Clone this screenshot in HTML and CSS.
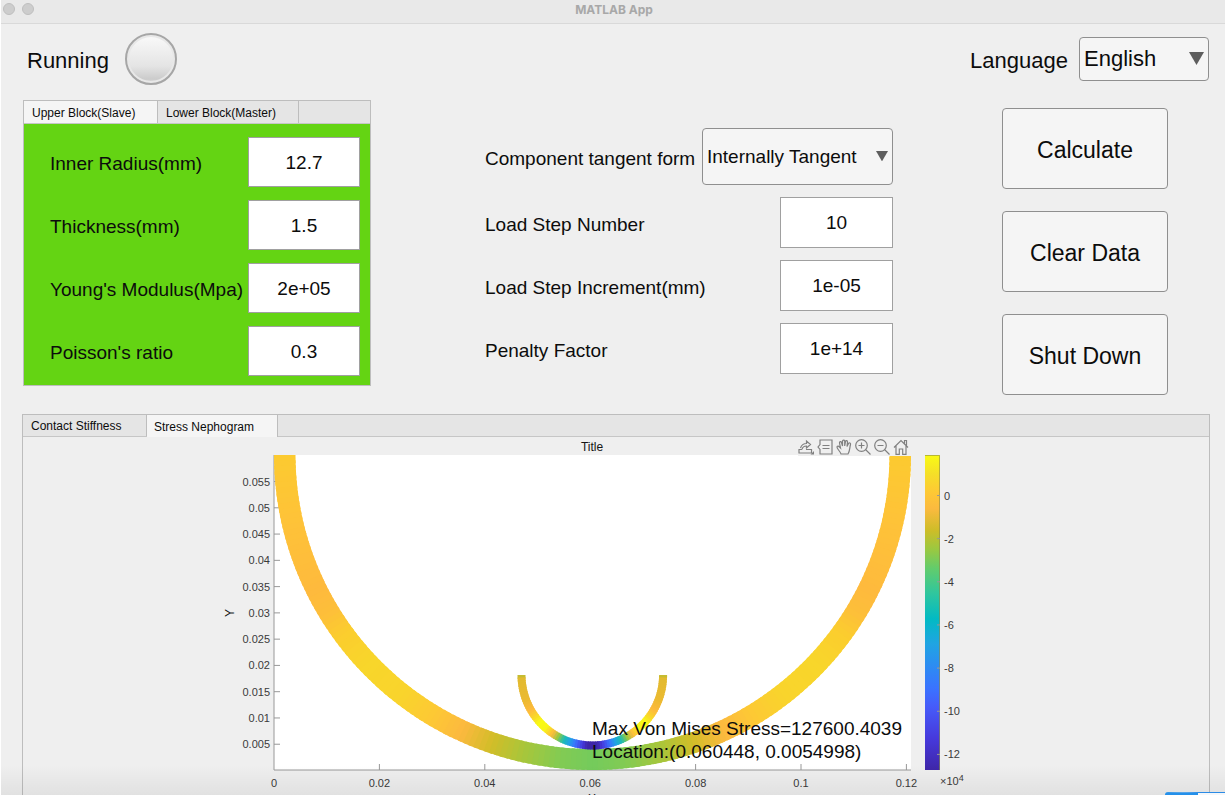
FILE: index.html
```html
<!DOCTYPE html>
<html lang="en">
<head>
<meta charset="utf-8">
<title>MATLAB App</title>
<link rel="stylesheet" href="styles.css">
</head>
<body>
<div class="window">
  <header class="titlebar">
    <span class="dot"></span><span class="dot"></span>
    <h1 class="window-title">MATLAB App</h1>
  </header>

  <div class="status-row">
    <div class="status"><span class="status-text">Running</span><span class="lamp"></span></div>
    <div class="language">
      <label class="status-text" for="language">Language</label>
      <div class="dropdown language-dropdown">
        <select id="language"><option>English</option><option>Chinese</option></select>
        <svg class="arrow arrow-large" viewBox="0 0 15 13"><path d="M0 0H15L7.5 13Z"/></svg>
      </div>
    </div>
  </div>

  <main class="controls">
    <section class="block">
      <div class="tabs block-tabs" role="tablist">
        <button class="tab active" role="tab" aria-selected="true">Upper Block(Slave)</button>
        <button class="tab" role="tab">Lower Block(Master)</button>
      </div>
      <div class="block-body">
        <div class="field"><label for="radius">Inner Radius(mm)</label><input id="radius" value="12.7"></div>
        <div class="field"><label for="thickness">Thickness(mm)</label><input id="thickness" value="1.5"></div>
        <div class="field"><label for="modulus">Young's Modulus(Mpa)</label><input id="modulus" value="2e+05"></div>
        <div class="field"><label for="poisson">Poisson's ratio</label><input id="poisson" value="0.3"></div>
      </div>
    </section>

    <section class="settings">
      <div class="field">
        <label for="form">Component tangent form</label>
        <div class="dropdown form-dropdown">
          <select id="form"><option>Internally Tangent</option><option>Externally Tangent</option></select>
          <svg class="arrow" viewBox="0 0 15 13"><path d="M0 0H15L7.5 13Z"/></svg>
        </div>
      </div>
      <div class="field"><label for="steps">Load Step Number</label><input id="steps" value="10"></div>
      <div class="field"><label for="increment">Load Step Increment(mm)</label><input id="increment" value="1e-05"></div>
      <div class="field"><label for="penalty">Penalty Factor</label><input id="penalty" value="1e+14"></div>
    </section>

    <section class="actions">
      <button class="action">Calculate</button>
      <button class="action">Clear Data</button>
      <button class="action">Shut Down</button>
    </section>
  </main>

  <section class="results">
    <div class="tabs result-tabs" role="tablist">
      <button class="tab" role="tab">Contact Stiffness</button>
      <button class="tab active" role="tab" aria-selected="true">Stress Nephogram</button>
    </div>
    <div class="plot">
      <svg class="chart" viewBox="23 437 1186 370" role="img" aria-label="Stress nephogram">
        <defs>
          <linearGradient id="parula" x1="0" y1="1" x2="0" y2="0">
            <stop offset="0" stop-color="#3e26a8"/><stop offset=".1" stop-color="#4639dc"/>
            <stop offset=".2" stop-color="#465bf9"/><stop offset=".26" stop-color="#3a73ff"/>
            <stop offset=".33" stop-color="#2d8cf2"/><stop offset=".4" stop-color="#20a4e3"/>
            <stop offset=".48" stop-color="#02bac3"/><stop offset=".56" stop-color="#2fc69e"/>
            <stop offset=".64" stop-color="#62cc6c"/><stop offset=".7" stop-color="#9ac841"/>
            <stop offset=".76" stop-color="#cdbd28"/><stop offset=".83" stop-color="#fbba3f"/>
            <stop offset=".88" stop-color="#fec835"/><stop offset=".94" stop-color="#f5df28"/>
            <stop offset="1" stop-color="#f9fb15"/>
          </linearGradient>
        </defs>
        <text class="plot-title" x="592" y="451">Title</text>
        <rect x="274" y="455" width="637" height="315" fill="#fff"/>
        <path class="axis" d="M274 455V770H911"/>
        <g id="axis-ticks"></g>
        <g id="large-ring"></g>
        <g id="small-ring"></g>
        <text class="axis-label" transform="translate(234 613) rotate(-90)">Y</text>
        <text class="axis-label" x="592" y="803">X</text>
        <rect x="925" y="455" width="15" height="315" fill="url(#parula)"/>
        <path class="bar-edge" d="M925 455.5H939.5V770"/>
        <g id="bar-ticks"></g>
        <text class="tick" x="940" y="785">×10<tspan class="exponent" dy="-4">4</tspan></text>
        <text class="note" x="592" y="735">Max Von Mises Stress=127600.4039</text>
        <text class="note" x="592" y="758">Location:(0.060448, 0.0054998)</text>
      </svg>
      <div class="toolbar">
        <button aria-label="Export"><svg viewBox="0 0 16 16"><path d="M4 10.500H1V14H13.500V10.500H8M2.500 9C3.500 6 6 4.500 8.500 4.500V2L12.500 5.500L8.500 9V7C6.500 7 4.500 8 4 10.500"/><path class="solid" d="M16 12V15.500H12.500Z"/></svg></button>
        <button aria-label="Data tips"><svg viewBox="0 0 16 16"><path d="M3 1H15V15H3V10.500L1 8L3 5.500ZM5.500 6.500H12.500M5.500 9.500H12.500"/></svg></button>
        <button aria-label="Pan"><svg viewBox="0 0 16 16"><path d="M5 15C4 12 1 10 1 8C1 7 2.500 6.800 3.500 8L4.500 9L3.500 4C3.300 2.500 5 2 5.500 3.500L6.500 7V2C6.500 .7 8.500 .7 8.700 2V7L9.500 2.500C9.800 1.200 11.500 1.500 11.500 3L11 7.500L12.500 4.500C13.200 3.300 15 4 14.500 5.500C13.500 9 14 12 12 15Z"/></svg></button>
        <button aria-label="Zoom in"><svg viewBox="0 0 16 16"><circle cx="6.500" cy="6.500" r="5.800"/><path d="M10.500 10.500L15.500 15.500M3.500 6.500H9.500M6.500 3.500V9.500"/></svg></button>
        <button aria-label="Zoom out"><svg viewBox="0 0 16 16"><circle cx="6.500" cy="6.500" r="5.800"/><path d="M10.500 10.500L15.500 15.500M3.500 6.500H9.500"/></svg></button>
        <button aria-label="Restore view"><svg viewBox="0 0 16 16"><path d="M1 8.500L8 1.500L15 8.500M3 7V15.300H6.300V10H9.700V15.300H13V7M11.500 4.500V1.500H13.500V6.500"/></svg></button>
      </div>
    </div>
  </section>
  <div class="bottom-shade"></div>
  <div class="edge-window"></div>
</div>
<script src="plot.js"></script>
</body>
</html>
```

FILE: styles.css
```css
* {
  box-sizing: border-box;
}

html,
body {
  margin: 0;
  height: 100%;
  overflow: hidden;
}

body {
  background: #fff;
  color: #0c0c0c;
  font-family: "Liberation Sans", Arial, sans-serif;
  font-size: 19px;
}

button,
input,
select {
  margin: 0;
  color: inherit;
  font: inherit;
}

.window {
  position: relative;
  height: calc(100vh - 1px);
  margin: 0 1px;
  overflow: hidden;
  background: #efefef;
}

.titlebar {
  display: flex;
  align-items: center;
  gap: 7px;
  height: 24px;
  padding: 0 2px 5px;
  background: #e9e9e9;
  border-bottom: 1px solid #d9d9d9;
}

.dot {
  width: 12px;
  height: 12px;
  border: 1px solid #bfbfbf;
  border-radius: 50%;
  background: #cdcdcd;
}

.window-title {
  flex: 1;
  margin: 0 36px 0 0;
  color: #a8a8a8;
  font: bold 12px Inter, sans-serif;
  text-align: center;
}

.status-row {
  display: flex;
  align-items: center;
  justify-content: space-between;
  padding: 9px 16px 15px 26px;
  font-size: 22px;
}

.status,
.language {
  display: flex;
  align-items: center;
}

.status {
  gap: 16px;
}

.status-text {
  padding-top: 4px;
}

.language {
  gap: 11px;
}

.lamp {
  width: 52px;
  height: 52px;
  border: 2px solid #a6a6a6;
  border-radius: 50%;
  background: linear-gradient(#fafafa, #e4e4e4 65%, #cbcbcb 92%, #e4e4e4);
  box-shadow: inset 0 0 0 2px #e8e8e8;
}

.dropdown {
  position: relative;
}

.dropdown select {
  width: 100%;
  height: 100%;
  padding: 0 4px 1px;
  appearance: none;
  border: 1px solid #8f8f8f;
  border-radius: 4px;
  background: #f5f5f5;
}

.language-dropdown {
  width: 130px;
  height: 44px;
}

.arrow {
  position: absolute;
  top: 50%;
  right: 5px;
  width: 12px;
  margin-top: -6px;
  fill: #5e5e5e;
  pointer-events: none;
}

.arrow-large {
  width: 15px;
  margin-top: -7px;
}

.controls {
  display: grid;
  grid-template-columns: 348fr 114fr 408fr 109fr 166fr;
  align-items: start;
  padding: 0 57px 0 22px;
}

.block {
  border: 1px solid #bdbdbd;
  background: #64d413;
}

.tabs {
  display: flex;
  background: #e5e5e5;
  border-bottom: 1px solid #c6c6c6;
}

.tab {
  height: 22px;
  padding: 1px 8px 0;
  border: 0;
  border-right: 1px solid #bdbdbd;
  background: #e5e5e5;
  font-size: 12px;
  text-align: left;
  white-space: nowrap;
}

.tab.active {
  background: #f5f5f5;
}

.block-tabs .tab {
  width: 141px;
}

.block-tabs .tab.active {
  width: 134px;
}

.block-body {
  display: grid;
  gap: 13px;
  padding: 13px 10px 9px 26px;
}

.field {
  display: flex;
  align-items: center;
  justify-content: space-between;
  white-space: nowrap;
}

.field label {
  padding-top: 4px;
}

.field input {
  width: 112px;
  height: 50px;
  padding: 1px 0 0;
  border: 1px solid #a0a0a0;
  border-radius: 0;
  background: #fff;
  text-align: center;
}

.settings {
  grid-column: 3;
  display: grid;
  gap: 12px;
  padding-top: 28px;
}

.settings .field input {
  width: 113px;
  height: 51px;
}

.form-dropdown {
  width: 191px;
  height: 57px;
}

.actions {
  grid-column: 5;
  display: grid;
  gap: 22px;
  padding-top: 8px;
}

.action {
  height: 81px;
  padding: 3px 0 0;
  border: 1px solid #8f8f8f;
  border-radius: 4px;
  background: #f5f5f5;
  font-size: 23px;
}

.results {
  margin: 19px 15px 0 21px;
  border: 1px solid #bdbdbd;
}

.result-tabs .tab {
  width: 124px;
  height: 21px;
}

.result-tabs .tab.active {
  width: 131px;
  height: 22px;
  margin-bottom: -1px;
  padding-left: 7px;
}

.plot {
  position: relative;
}

.chart {
  display: block;
  width: 100%;
}

.axis,
.tick-line {
  fill: none;
  stroke: #989898;
}

.bar-edge {
  fill: none;
  stroke: #8a8a4a;
  stroke-opacity: .6;
}

.tick {
  fill: #3a3a3a;
  font-size: 11px;
}

.tick-end {
  text-anchor: end;
}

.tick-middle,
.plot-title,
.axis-label {
  text-anchor: middle;
}

.plot-title,
.axis-label {
  fill: #151515;
  font-size: 12px;
}

.exponent {
  font-size: 9px;
}

.note {
  fill: #0c0c0c;
  font-size: 19px;
}

.toolbar {
  position: absolute;
  top: 0;
  right: 25%;
  display: flex;
  gap: 3px;
  padding: 2px 4px 1px 0;
  background: #efefef;
}

.toolbar button {
  width: 16px;
  height: 16px;
  padding: 0;
  border: 0;
  background: none;
}

.toolbar svg {
  display: block;
  fill: none;
  stroke: #808080;
  stroke-width: 1.2;
}

.toolbar .solid {
  fill: #808080;
  stroke: none;
}

.bottom-shade {
  position: absolute;
  right: 0;
  bottom: 0;
  left: 0;
  height: 30px;
  background: linear-gradient(rgba(0, 0, 0, 0), rgba(0, 0, 0, .06));
  pointer-events: none;
}

.edge-window {
  position: absolute;
  right: 0;
  bottom: 0;
  width: 60px;
  height: 3px;
  border-top: 1px solid #2b8be6;
  border-left: 33px solid #2490ea;
  border-top-left-radius: 6px;
  background: #f4f7fa;
}
```

FILE: plot.js
```js
const NS = "http://www.w3.org/2000/svg";

function add(parent, name, attrs, text) {
  const node = document.createElementNS(NS, name);
  for (const key in attrs) node.setAttribute(key, attrs[key]);
  if (text !== undefined) node.textContent = text;
  parent.appendChild(node);
}

// Colour stops are [angle in degrees from the ring's tip to its lowest point, rgb].
function colourAt(stops, angle) {
  let i = 1;
  while (i < stops.length - 1 && stops[i][0] < angle) i++;
  const [a0, c0] = stops[i - 1];
  const [a1, c1] = stops[i];
  const t = Math.min(1, Math.max(0, (angle - a0) / (a1 - a0)));
  return "rgb(" + c0.map((v, k) => Math.round(v + (c1[k] - v) * t)).join() + ")";
}

function ring(id, cx, cy, outer, inner, stops, step) {
  const group = document.getElementById(id);
  const point = (radius, angle) => {
    const r = angle * Math.PI / 180;
    return (cx - radius[0] * Math.cos(r)).toFixed(2) + "," + (cy + radius[1] * Math.sin(r)).toFixed(2);
  };
  for (let a = 0; a < 180; a += step) {
    const end = Math.min(180, a + step * 1.6);
    const mid = a + step / 2;
    add(group, "polygon", {
      points: [point(outer, a), point(outer, end), point(inner, end), point(inner, a)].join(" "),
      fill: colourAt(stops, mid > 90 ? 180 - mid : mid)
    });
  }
}

ring("large-ring", 592.5, 455, [318.5, 315], [297, 294], [
  [0, [252, 202, 48]], [12, [254, 195, 56]], [26, [254, 186, 61]],
  [31, [253, 190, 58]], [36, [251, 205, 46]], [43, [248, 214, 43]],
  [52, [249, 212, 44]], [59, [253, 200, 53]], [65, [252, 185, 63]],
  [71, [209, 189, 40]], [77, [169, 198, 58]], [84, [130, 203, 83]],
  [90, [116, 203, 92]]
], 1);

ring("small-ring", 592.3, 675, [74.8, 74.5], [66.8, 66.5], [
  [0, [170, 190, 50]], [2, [226, 186, 48]], [20, [234, 186, 49]],
  [30, [254, 186, 61]], [38, [247, 225, 35]], [42, [249, 251, 21]],
  [49, [249, 245, 24]], [56, [253, 186, 62]], [61, [154, 200, 65]],
  [66, [30, 190, 175]], [71, [32, 164, 227]], [76, [58, 115, 255]],
  [82, [70, 57, 220]], [86, [62, 38, 168]], [90, [62, 38, 168]]
], 2);

const axisTicks = document.getElementById("axis-ticks");
for (let i = 1; i <= 11; i++) {
  const y = 770.5 - i * 26.27;
  add(axisTicks, "path", { class: "tick-line", d: `M274 ${y}h6` });
  add(axisTicks, "text", { class: "tick tick-end", x: 270, y: y + 4 }, String(i * 5 / 1000));
}
for (let i = 0; i <= 6; i++) {
  const x = 274 + i * 105.4;
  if (i) add(axisTicks, "path", { class: "tick-line", d: `M${x} 770v-6` });
  add(axisTicks, "text", { class: "tick tick-middle", x: x, y: 787 }, String(i * 2 / 100));
}

const barTicks = document.getElementById("bar-ticks");
for (let i = 0; i <= 6; i++) {
  const y = 495.5 + i * 43.15;
  add(barTicks, "path", { class: "tick-line", d: `M937 ${y}h3` });
  add(barTicks, "text", { class: "tick", x: 944, y: y + 4 }, String(-2 * i));
}
```
